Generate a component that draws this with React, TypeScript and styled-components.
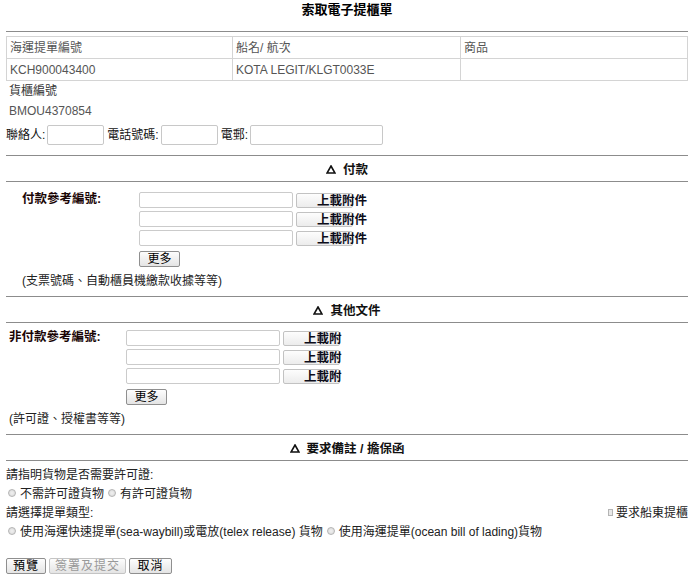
import React from 'react';
import styled, { createGlobalStyle } from 'styled-components';

const FONT = `"Liberation Sans", Arial, "Noto Sans CJK TC", sans-serif`;

const GlobalStyle = createGlobalStyle`
  body {
    margin: 0;
    background: #fff;
    font-family: ${FONT};
    font-size: 12px;
    color: #333;
  }
`;

interface Section {
  title: string;
  label: string;
  note: string;
  upload: string;
  indent: number;
  top: number;
}

const sections: Section[] = [
  { title: '付款', label: '付款參考編號:', note: '(支票號碼、自動櫃員機繳款收據等等)', upload: '上載附件', indent: 16, top: 10 },
  { title: '其他文件', label: '非付款參考編號:', note: '(許可證、授權書等等)', upload: '上載附', indent: 3, top: 7 },
];

const Triangle = () => (
  <svg width="10" height="9" viewBox="0 0 10 9">
    <path d="M5 1 L9 8 L1 8 Z" fill="none" stroke="#111" strokeWidth="1.6" strokeLinejoin="miter" />
  </svg>
);

const ClipIcon = () => (
  <svg width="4" height="9" viewBox="0 0 4 9">
    <path d="M3 2 V7 Q3 8.5 2 8.5 Q1 8.5 1 7 V2.5 Q1 1 2 1" fill="none" stroke="#c4c4c4" strokeWidth="0.9" />
  </svg>
);

const SectionHeader = ({ title }: { title: string }) => (
  <Header>
    <Triangle />
    <span>{title}</span>
  </Header>
);

const RefSection = ({ section }: { section: Section }) => (
  <>
    <SectionHeader title={section.title} />
    <RefBody $indent={section.indent} $top={section.top}>
      <RefRow>
        <RefLabel>{section.label}</RefLabel>
        <RefFields>
          {[0, 1, 2].map((i) => (
            <FieldRow key={i}>
              <RefInput type="text" />
              <UploadButton>
                <ClipIcon />
                <UploadText>{section.upload}</UploadText>
              </UploadButton>
            </FieldRow>
          ))}
          <MoreButton type="button">更多</MoreButton>
        </RefFields>
      </RefRow>
      <Note>{section.note}</Note>
    </RefBody>
  </>
);

const App = () => (
  <Page>
    <GlobalStyle />
    <Title>索取電子提櫃單</Title>
    <InfoTable>
      <tbody>
        <tr>
          <Cell>海運提單編號</Cell>
          <Cell>船名/ 航次</Cell>
          <Cell>商品</Cell>
        </tr>
        <tr>
          <Cell>KCH900043400</Cell>
          <Cell>KOTA LEGIT/KLGT0033E</Cell>
          <Cell />
        </tr>
      </tbody>
    </InfoTable>
    <InfoLine>貨櫃編號</InfoLine>
    <InfoLine $value>BMOU4370854</InfoLine>
    <ContactRow>
      <ContactLabel>聯絡人:</ContactLabel>
      <ContactInput type="text" $width={57} />
      <ContactLabel>電話號碼:</ContactLabel>
      <ContactInput type="text" $width={57} />
      <ContactLabel>電郵:</ContactLabel>
      <ContactInput type="text" $width={133} />
    </ContactRow>

    {sections.map((s) => (
      <RefSection key={s.title} section={s} />
    ))}

    <SectionHeader title="要求備註 / 擔保函" />
    <Remarks>
      <Line>請指明貨物是否需要許可證:</Line>
      <Line>
        <Radio type="radio" name="permit" />
        <span>不需許可證貨物</span>
        <Radio type="radio" name="permit" $gap />
        <span>有許可證貨物</span>
      </Line>
      <Line $split>
        <span>請選擇提單類型:</span>
        <CheckLabel>
          <Check type="checkbox" />
          要求船東提櫃
        </CheckLabel>
      </Line>
      <Line>
        <Radio type="radio" name="bl" />
        <span>使用海運快速提單(sea-waybill)或電放(telex release) 貨物</span>
        <Radio type="radio" name="bl" $gap />
        <span>使用海運提單(ocean bill of lading)貨物</span>
      </Line>
    </Remarks>
    <Actions>
      <ActionButton type="button" $width={40}>預覽</ActionButton>
      <ActionButton type="button" $width={77} disabled>簽署及提交</ActionButton>
      <ActionButton type="button" $width={43}>取消</ActionButton>
    </Actions>
  </Page>
);

export default App;

const Page = styled.div`
  width: 682px;
  padding: 0 7px 0 6px;
`;

const Title = styled.div`
  height: 31px;
  line-height: 20px;
  text-align: center;
  font-weight: bold;
  font-size: 13px;
  color: #000;
  border-bottom: 1px solid #8c8c8c;
`;

const InfoTable = styled.table`
  width: 682px;
  margin-top: 4px;
  border-collapse: collapse;
  table-layout: fixed;
`;

const Cell = styled.td`
  height: 21px;
  padding: 0 3px;
  border: 1px solid #d4d4d4;
  color: #555;
  line-height: 14px;
  vertical-align: middle;

  &:nth-child(1) { width: 219px; }
  &:nth-child(2) { width: 221px; }
`;

const InfoLine = styled.div<{ $value?: boolean }>`
  height: 20px;
  line-height: 20px;
  padding-left: 3px;
  color: ${({ $value }) => ($value ? '#555' : '#333')};
`;

const ContactRow = styled.div`
  display: flex;
  align-items: center;
  height: 24px;
  margin-top: 2px;
  color: #111;
`;

const ContactLabel = styled.span`
  line-height: 14px;
`;

const ContactInput = styled.input<{ $width: number }>`
  width: ${({ $width }) => $width}px;
  height: 20px;
  box-sizing: border-box;
  margin: 0 3px 0 2px;
  border: 1px solid #c8c8c8;
  border-radius: 2px;
  padding: 0 3px;
`;

const Header = styled.div`
  margin-top: 8px;
  height: 25px;
  border-top: 1px solid #8c8c8c;
  border-bottom: 1px solid #8c8c8c;
  display: flex;
  align-items: center;
  justify-content: center;
  gap: 7px;
  font-weight: bold;
  font-size: 12.5px;
  color: #111;

  svg {
    margin-top: 1px;
  }
`;

const RefBody = styled.div<{ $indent: number; $top: number }>`
  padding: ${({ $top }) => $top}px 0 0 ${({ $indent }) => $indent}px;
`;

const RefRow = styled.div`
  display: flex;
`;

const RefLabel = styled.div`
  width: 117px;
  font-weight: bold;
  font-size: 12.5px;
  color: #1a0505;
  line-height: 14px;
`;

const RefFields = styled.div`
  display: flex;
  flex-direction: column;
  align-items: flex-start;
`;

const FieldRow = styled.div`
  display: flex;
  align-items: center;
  height: 20px;
  margin-top: -1px;

  &:first-child {
    margin-top: -2px;
  }
`;

const RefInput = styled.input`
  width: 154px;
  height: 16px;
  box-sizing: border-box;
  margin: 0;
  border: 1px solid #cbcbcb;
  border-radius: 2px;
  padding: 0 3px;
`;

const UploadButton = styled.div`
  flex: none;
  width: 57px;
  height: 15px;
  box-sizing: border-box;
  margin: 1px 0 0 3px;
  border: 1px solid #c2c2c2;
  border-radius: 2px;
  background: linear-gradient(#fdfdfd, #ececec);
  display: flex;
  align-items: center;
  padding-left: 13px;
  white-space: nowrap;
`;

const UploadText = styled.span`
  margin-left: 7px;
  font-weight: bold;
  font-size: 12.5px;
  color: #0d0d1a;
  line-height: 14px;
`;

const MoreButton = styled.button`
  margin-top: 3px;
  width: 41px;
  height: 16px;
  padding: 0;
  border: 1px solid #8f8f8f;
  border-radius: 2px;
  background: linear-gradient(#fdfdfd, #e4e4e4);
  font-family: ${FONT};
  font-size: 12px;
  line-height: 12px;
  color: #000;
`;

const Note = styled.div`
  margin-top: 7px;
  line-height: 14px;
  color: #222;
`;

const Remarks = styled.div`
  padding-top: 3px;
  color: #222;
`;

const Line = styled.div<{ $split?: boolean }>`
  display: flex;
  align-items: center;
  justify-content: ${({ $split }) => ($split ? 'space-between' : 'flex-start')};
  height: 19px;
  white-space: nowrap;
`;

const Radio = styled.input<{ $gap?: boolean }>`
  appearance: none;
  width: 8px;
  height: 8px;
  margin: 1px 4px 0 ${({ $gap }) => ($gap ? '4px' : '2px')};
  border: 1px solid #b4b4b4;
  border-radius: 50%;
  background: radial-gradient(circle, #f0f0f0, #d8d8d8);
`;

const CheckLabel = styled.label`
  display: flex;
  align-items: center;
  width: 80px;
  overflow: hidden;
`;

const Check = styled.input`
  appearance: none;
  width: 7px;
  height: 7px;
  margin: 1px 3px 0 0;
  border: 1px solid #b4b4b4;
  background: #e8e8e8;
`;

const Actions = styled.div`
  display: flex;
  gap: 3px;
  margin-top: 18px;
`;

const ActionButton = styled.button<{ $width: number }>`
  width: ${({ $width }) => $width}px;
  height: 16px;
  padding: 0;
  border: 1px solid #8f8f8f;
  border-radius: 2px;
  background: linear-gradient(#fdfdfd, #e4e4e4);
  font-family: ${FONT};
  font-size: 12px;
  line-height: 12px;
  color: #000;
  letter-spacing: 1px;

  &:disabled {
    color: #999;
    border-color: #c4c4c4;
  }
`;
